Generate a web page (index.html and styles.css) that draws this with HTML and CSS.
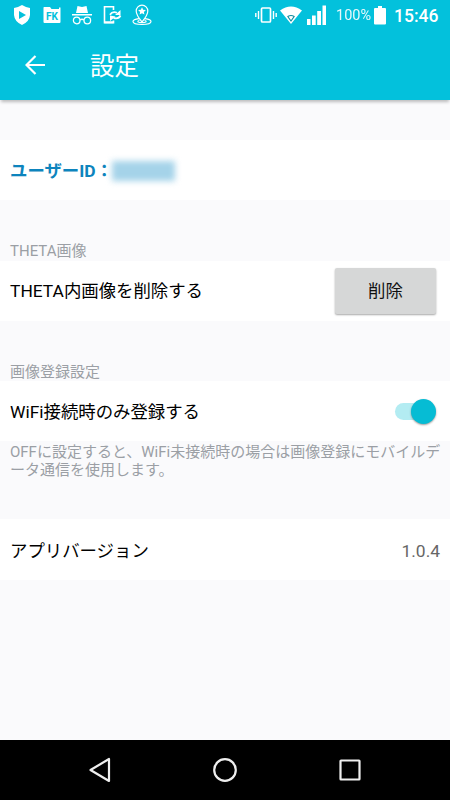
FILE: index.html
```
<!DOCTYPE html>
<html lang="ja">
<head>
  <meta charset="UTF-8">
  <meta name="viewport" content="width=device-width, initial-scale=1.0">
  <title>設定</title>
  <link rel="stylesheet" href="styles.css">
</head>
<body>
  <div class="status-bar">
    <div class="notifications">
      <svg width="18" height="22" viewBox="0 0 18 22">
        <path fill="#fff" d="M9 1 Q13 3.500 17 4 V11 Q16.500 17.500 9 21 Q1.500 17.500 1 11 V4 Q5 3.500 9 1z"/>
        <path fill="#03c1dc" d="M6 7v8l7-4z"/>
      </svg>
      <svg width="18" height="22" viewBox="0 0 18 22">
        <path fill="#fff" d="M1 3h6l1.500 2H16V3.500h1.500V18a1 1 0 0 1-1 1H1.500a1 1 0 0 1-1-1V3.500z"/>
        <text class="folder-text" x="3" y="15.500" textLength="12" lengthAdjust="spacingAndGlyphs">FK</text>
      </svg>
      <svg width="20" height="22" viewBox="0 0 20 22">
        <path fill="#fff" d="M5.500 2 10 3l4.500-1L16 9H4zM0 10h20v1.500H0z"/>
        <g fill="none" stroke="#fff" stroke-width="1.300">
          <circle cx="4.700" cy="16.500" r="3.300"/>
          <circle cx="15.300" cy="16.500" r="3.300"/>
          <path d="M8 16q2-1.500 4 0"/>
        </g>
      </svg>
      <svg width="19" height="22" viewBox="0 0 19 22">
        <path fill="none" stroke="#fff" stroke-width="1.600" d="M10.500 6V2.800H1.500v16h9V16.500"/>
        <path fill="none" stroke="#fff" stroke-width="1.800" d="M7 10.800Q9.500 6.800 14 8.800M17.500 11.500Q15.500 15.500 10.500 13.800"/>
        <path fill="#fff" d="M17.500 6v5h-5.500zM7 17v-5.500l5.500 1zM1.500 17.300h9v2h-9z"/>
      </svg>
      <svg width="20" height="22" viewBox="0 0 20 22">
        <g fill="none" stroke="#fff" stroke-width="1.200">
          <path d="M10 18Q4.200 11 4.200 7a5.800 5.800 0 0 1 11.600 0Q15.800 11 10 18z"/>
          <path d="M7 14.700q-6 .8-6 2.800c0 4 18 4 18 0q0-2-6-2.800M7.500 16.500q-2 .5-1.500 1.300c1 1.200 7 1.200 8 0q.5-.8-1.500-1.300"/>
        </g>
        <path fill="#fff" d="M10 3.200l1.200 2.500 2.700.3-2 1.900.5 2.700-2.400-1.300-2.400 1.300.5-2.700-2-1.900 2.700-.3z"/>
      </svg>
    </div>
    <div class="system">
      <svg class="vibrate" width="22" height="20" viewBox="0 0 22 20">
        <rect x="6.500" y="3" width="9" height="14" rx="1" fill="none" stroke="#fff" stroke-width="1.700"/>
        <path d="M.8 8v4M3.500 6v8M18.500 6v8M21.200 8v4" stroke="#fff" stroke-width="1.400"/>
      </svg>
      <svg class="wifi" width="22" height="20" viewBox="0 0 22 20">
        <path fill="#fff" d="M0 5.500Q11-2.500 22 5.500L11 19z"/>
        <path fill="none" stroke="#168ea0" stroke-width="1.200" stroke-linejoin="round" d="M7.800 11.500q3.200-2 6.400 0L11 16z"/>
      </svg>
      <svg class="signal" width="20" height="20" viewBox="0 0 20 20">
        <path fill="#fff" d="M0 14h3.500v6H0zM5 10.500h3.700V20H5zM10.200 6h3.800v14h-3.800zM15.500 0.500H19V20h-3.500z"/>
      </svg>
      <span class="percent">100%</span>
      <svg class="battery" width="12" height="19" viewBox="0 0 12 19">
        <path fill="#fff" d="M4 0h4v2h3a1 1 0 0 1 1 1v14.500a1 1 0 0 1-1 1H1a1 1 0 0 1-1-1V3a1 1 0 0 1 1-1h3z"/>
      </svg>
      <span class="clock">15:46</span>
    </div>
  </div>

  <header class="app-bar">
    <svg class="back" width="20" height="20" viewBox="0 0 20 20">
      <path fill="none" stroke="#fff" stroke-width="2.200" d="M20 10H2M10.500 1 1.500 10l9 9"/>
    </svg>
    <h1>設定</h1>
  </header>

  <main class="settings">
    <section class="row user">
      <span class="user-label">ユーザーID：</span>
      <span class="user-id"></span>
    </section>

    <h2 class="label">THETA画像</h2>
    <section class="row">
      <span>THETA内画像を削除する</span>
      <button class="delete" type="button">削除</button>
    </section>

    <h2 class="label">画像登録設定</h2>
    <section class="row">
      <span>WiFi接続時のみ登録する</span>
      <span class="switch"><span class="thumb"></span></span>
    </section>
    <p class="note">OFFに設定すると、WiFi未接続時の場合は画像登録にモバイルデータ通信を使用します。</p>

    <section class="row app-version">
      <span>アプリバージョン</span>
      <span class="version">1.0.4</span>
    </section>
  </main>

  <nav class="nav-bar">
    <svg width="26" height="26" viewBox="0 0 26 26"><path d="M22 2v22L3.500 13z"/></svg>
    <svg width="26" height="26" viewBox="0 0 26 26"><circle cx="13" cy="13" r="10.800"/></svg>
    <svg width="26" height="26" viewBox="0 0 26 26"><rect x="3.500" y="3.500" width="19" height="19" rx=".5"/></svg>
  </nav>
</body>
</html>
```

FILE: styles.css
```
* { box-sizing: border-box; }
body {
  margin: 0;
  height: 800px;
  display: flex;
  flex-direction: column;
  background: #fafafc;
  color: #000;
  font-family: Roboto, "Noto Sans CJK JP", sans-serif;
  overflow: hidden;
}
svg { display: block; flex: none; }
.status-bar {
  height: 30px;
  flex: none;
  display: flex;
  justify-content: space-between;
  padding: 0 12px 0 13px;
  background: #03c1dc;
  color: #fff;
}
.notifications {
  display: flex;
  gap: 11.5px;
  padding-top: 4px;
}
.notifications svg:nth-child(n+4) { margin-left: -1px; }
.folder-text {
  font-size: 10px;
  font-weight: bold;
  fill: #03c1dc;
}
.system {
  display: flex;
  align-items: center;
}
.wifi { margin-left: 3px; }
.signal { margin-left: 5px; }
.percent {
  margin-left: 9px;
  width: 36px;
  padding-top: 1px;
  font-size: 14.5px;
  opacity: 0.9;
}
.battery { margin-left: 2px; }
.clock {
  margin-left: 8px;
  width: 44px;
  padding-top: 1px;
  font-size: 17.5px;
  font-weight: 500;
}
.app-bar {
  height: 70px;
  flex: none;
  display: flex;
  align-items: center;
  padding-left: 25px;
  background: #03c1dc;
  color: #fff;
  box-shadow: 0 3px 3px -1px rgba(0, 0, 0, 0.25);
}
.app-bar h1 {
  margin: 4px 0 0 45px;
  font-size: 24.5px;
  font-weight: 400;
  line-height: 36px;
}
.settings {
  flex: 1;
  padding-top: 40px;
}
.row {
  height: 60px;
  display: flex;
  align-items: center;
  justify-content: space-between;
  padding: 1px 10px 0;
  background: #fff;
  font-size: 17.4px;
  line-height: 26px;
}
.user {
  justify-content: flex-start;
  padding-top: 2px;
  color: #0d84bd;
  font-weight: 700;
}
.user-id {
  width: 63px;
  height: 20px;
  margin-left: -1px;
  background: #a5d3e9;
  filter: blur(3px);
}
.label {
  height: 60.500px;
  margin: 0;
  padding: 41px 10px 0;
  color: #9b9fa5;
  font-size: 15px;
  font-weight: 400;
  line-height: 21px;
}
.delete {
  width: 101px;
  height: 46px;
  margin-right: 4px;
  padding: 0;
  border: 0;
  border-radius: 2px;
  background: #d6d7d7;
  box-shadow: 0 1px 2px rgba(0, 0, 0, 0.35);
  color: #111;
  font: inherit;
}
.switch {
  position: relative;
  width: 40px;
  height: 17px;
  margin-right: 5px;
  border-radius: 9px;
  background: #b3ecf2;
}
.thumb {
  position: absolute;
  top: -4px;
  right: -1px;
  width: 25px;
  height: 25px;
  border-radius: 50%;
  background: #06bcd4;
  box-shadow: 0 1px 2px rgba(0, 0, 0, 0.4);
}
.note {
  height: 78px;
  margin: 0;
  padding: 3px 0 0 10px;
  color: #9b9fa5;
  font-size: 15px;
  line-height: 17.5px;
}
.app-version {
  height: 61px;
  padding-top: 2px;
}
.version { color: #666; }
.nav-bar {
  height: 60px;
  flex: none;
  display: flex;
  align-items: center;
  justify-content: center;
  gap: 99px;
  background: #000;
}
.nav-bar svg {
  fill: none;
  stroke: #eee;
  stroke-width: 2.2;
  stroke-linejoin: round;
}
```
